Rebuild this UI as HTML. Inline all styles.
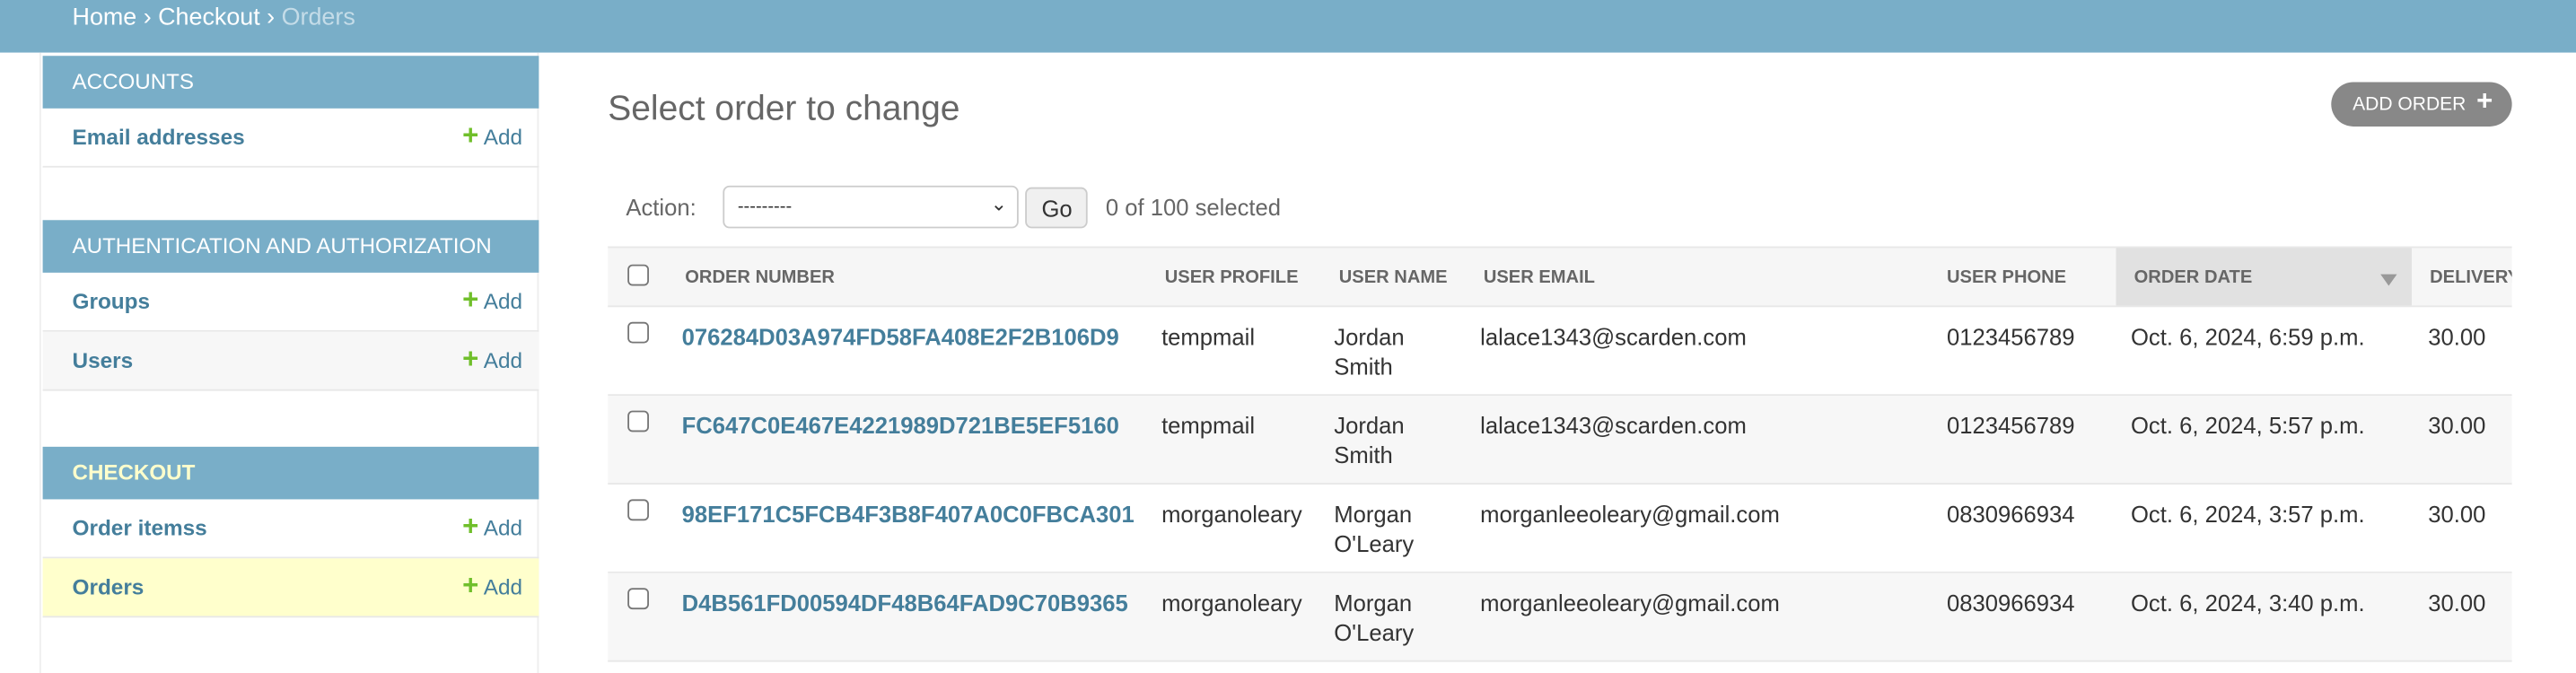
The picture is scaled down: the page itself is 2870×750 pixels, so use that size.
<!DOCTYPE html>
<html><head><meta charset="utf-8"><style>
*{box-sizing:border-box;margin:0;padding:0}
html,body{width:2870px;height:750px;overflow:hidden;background:#fff}
#w{position:absolute;left:0;top:0;width:1568px;height:410px;transform:scale(1.83036);transform-origin:0 0;font-family:"Liberation Sans",sans-serif;color:#333}
.a{position:absolute}
#hdr{left:0;top:0;width:1568px;height:32px;background:#79aec8;color:#fff;font-size:14.7px;padding:3px 0 0 44px;white-space:nowrap}
#hdr span{color:#c4dce8}
#side{left:24px;top:32px;width:304px;height:378px;border-left:1px solid #eee;border-right:1px solid #eee}
.cap{position:absolute;left:1px;width:302px;height:32px;background:#79aec8;color:#fff;font-size:13.2px;padding:8px 0 0 18px}
.row{position:absolute;left:1px;width:302px;height:36px;border-bottom:1px solid #e8e8e8;font-size:13.3px;font-weight:bold;color:#447e9b;padding:10px 0 0 18px}
.row .ad{position:absolute;right:10px;top:10px;font-weight:normal;color:#447e9b}
.row .ad b{color:#70bf2b;font-weight:bold;font-size:17px;line-height:12px}
h1{left:370px;top:54px;font-size:21.3px;font-weight:300;color:#666;white-space:nowrap}
#btn{left:1419px;top:50px;width:110px;height:27px;border-radius:14px;background:#888;color:#fff;font-size:11.5px;padding:7px 0 0 13px;white-space:nowrap}
#act{left:381px;top:118px;font-size:14px;color:#666}
#sel{left:440px;top:113px;width:180px;height:26px;border:1px solid #ccc;border-radius:4px;font-size:11px;padding:6px 0 0 8px}
#go{left:624px;top:114px;width:38px;height:25px;border:1px solid #ccc;border-radius:4px;background:#f0f0f0;font-size:14px;padding:4px 0 0 9px}
#cnt{left:673px;top:118px;font-size:14px;color:#666;white-space:nowrap}
#th{left:370px;top:150px;width:1159px;height:37px;background:#f6f6f6;border-top:1px solid #e8e8e8;border-bottom:1px solid #e8e8e8}
.h{position:absolute;top:12px;font-size:11px;font-weight:bold;color:#666;white-space:nowrap}
.cb{position:absolute;width:13px;height:13px;border:1px solid #777;border-radius:3px;background:#fff}
.tr{position:absolute;left:370px;width:1159px;height:54px;border-bottom:1px solid #e8e8e8}
.c{position:absolute;top:9px;font-size:14px;color:#333;line-height:18px;white-space:nowrap}
.c.l{color:#447e9b;font-weight:bold}
</style></head><body><div id="w">
<div id="hdr" class="a">Home › Checkout › <span>Orders</span></div>
<div id="side" class="a">
<div class="cap" style="top:2px">ACCOUNTS</div>
<div class="row" style="top:34px">Email addresses<span class="ad"><b>+</b> Add</span></div>
<div class="cap" style="top:102px">AUTHENTICATION AND AUTHORIZATION</div>
<div class="row" style="top:134px">Groups<span class="ad"><b>+</b> Add</span></div>
<div class="row" style="top:170px;background:#f7f7f7">Users<span class="ad"><b>+</b> Add</span></div>
<div class="cap" style="top:240px;color:#ffffcc;font-weight:bold">CHECKOUT</div>
<div class="row" style="top:272px">Order itemss<span class="ad"><b>+</b> Add</span></div>
<div class="row" style="top:308px;background:#ffffcc">Orders<span class="ad"><b>+</b> Add</span></div>
</div>
<h1 class="a">Select order to change</h1>
<div id="btn" class="a">ADD ORDER &nbsp;<b style="font-size:17px;line-height:10px">+</b></div>
<div id="act" class="a">Action:</div>
<div id="sel" class="a">---------<span style="position:absolute;right:6px;top:3px;font-size:12px">⌄</span></div>
<div id="go" class="a">Go</div>
<div id="cnt" class="a">0 of 100 selected</div>
<div id="th" class="a">
<div class="cb" style="left:12px;top:10px"></div>
<div class="h" style="left:47px">ORDER NUMBER</div>
<div class="h" style="left:339px">USER PROFILE</div>
<div class="h" style="left:445px">USER NAME</div>
<div class="h" style="left:533px">USER EMAIL</div>
<div class="h" style="left:815px">USER PHONE</div>
<div style="position:absolute;left:918px;top:0;width:180px;height:35px;background:#e1e1e1"><div class="h" style="left:11px">ORDER DATE</div><div style="position:absolute;right:9px;top:16px;border:5px solid transparent;border-top:7px solid #999"></div></div>
<div class="h" style="left:1109px;width:50px;overflow:hidden">DELIVERY</div>
</div>
<div class="tr" style="top:187px"><div class="cb" style="left:12px;top:9px"></div><div class="c l" style="left:45px">076284D03A974FD58FA408E2F2B106D9</div><div class="c" style="left:337px">tempmail</div><div class="c" style="left:442px">Jordan<br>Smith</div><div class="c" style="left:531px">lalace1343@scarden.com</div><div class="c" style="left:815px">0123456789</div><div class="c" style="left:927px">Oct. 6, 2024, 6:59 p.m.</div><div class="c" style="left:1108px">30.00</div></div>
<div class="tr" style="top:241px;background:#f7f7f7"><div class="cb" style="left:12px;top:9px"></div><div class="c l" style="left:45px">FC647C0E467E4221989D721BE5EF5160</div><div class="c" style="left:337px">tempmail</div><div class="c" style="left:442px">Jordan<br>Smith</div><div class="c" style="left:531px">lalace1343@scarden.com</div><div class="c" style="left:815px">0123456789</div><div class="c" style="left:927px">Oct. 6, 2024, 5:57 p.m.</div><div class="c" style="left:1108px">30.00</div></div>
<div class="tr" style="top:295px"><div class="cb" style="left:12px;top:9px"></div><div class="c l" style="left:45px">98EF171C5FCB4F3B8F407A0C0FBCA301</div><div class="c" style="left:337px">morganoleary</div><div class="c" style="left:442px">Morgan<br>O'Leary</div><div class="c" style="left:531px">morganleeoleary@gmail.com</div><div class="c" style="left:815px">0830966934</div><div class="c" style="left:927px">Oct. 6, 2024, 3:57 p.m.</div><div class="c" style="left:1108px">30.00</div></div>
<div class="tr" style="top:349px;background:#f7f7f7"><div class="cb" style="left:12px;top:9px"></div><div class="c l" style="left:45px">D4B561FD00594DF48B64FAD9C70B9365</div><div class="c" style="left:337px">morganoleary</div><div class="c" style="left:442px">Morgan<br>O'Leary</div><div class="c" style="left:531px">morganleeoleary@gmail.com</div><div class="c" style="left:815px">0830966934</div><div class="c" style="left:927px">Oct. 6, 2024, 3:40 p.m.</div><div class="c" style="left:1108px">30.00</div></div>
</div></body></html>
